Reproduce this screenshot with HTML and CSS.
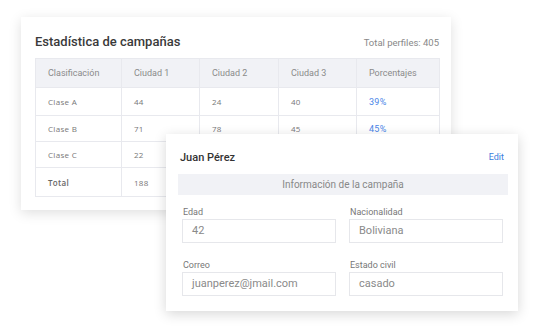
FILE: index.html
```html
<!DOCTYPE html>
<html lang="es">
<head>
    <meta charset="UTF-8">
    <title>Estadística de campañas</title>
    <link rel="stylesheet" href="styles.css">
</head>
<body>
    <div class="stats-card">
        <div class="stats-head">
            <h2>Estadística de campañas</h2>
            <span class="total">Total perfiles: 405</span>
        </div>
        <table class="stats-table">
            <colgroup>
                <col class="c1"><col class="c2"><col class="c3"><col class="c4"><col class="c5">
            </colgroup>
            <thead>
                <tr>
                    <th>Clasificación</th>
                    <th>Ciudad 1</th>
                    <th>Ciudad 2</th>
                    <th>Ciudad 3</th>
                    <th>Porcentajes</th>
                </tr>
            </thead>
            <tbody>
                <tr class="r-a">
                    <td>Clase A</td><td>44</td><td>24</td><td>40</td><td class="pct">39%</td>
                </tr>
                <tr>
                    <td>Clase B</td><td>71</td><td>78</td><td>45</td><td class="pct">45%</td>
                </tr>
                <tr>
                    <td>Clase C</td><td>22</td><td>18</td><td>12</td><td class="pct">16%</td>
                </tr>
                <tr class="r-total">
                    <td class="strong">Total</td><td>188</td><td>120</td><td>97</td><td class="pct">100%</td>
                </tr>
            </tbody>
        </table>
    </div>

    <div class="profile-card">
        <div class="profile-head">
            <h3>Juan Pérez</h3>
            <a class="edit" href="#">Edit</a>
        </div>
        <div class="section-bar">Información de la campaña</div>
        <div class="fields">
            <div class="field">
                <label>Edad</label>
                <div class="input">42</div>
            </div>
            <div class="field">
                <label>Nacionalidad</label>
                <div class="input">Boliviana</div>
            </div>
            <div class="field">
                <label>Correo</label>
                <div class="input">juanperez@jmail.com</div>
            </div>
            <div class="field">
                <label>Estado civil</label>
                <div class="input">casado</div>
            </div>
        </div>
    </div>
</body>
</html>
```

FILE: styles.css
```css
body {
    margin: 0;
    background-color: #fff;
    font-family: Roboto, "Liberation Sans", sans-serif;
    position: relative;
    width: 540px;
    height: 330px;
    overflow: hidden;
}
.stats-card {
    margin: 17px 0 0 21px;
    width: 430px;
    height: 193px;
    box-sizing: border-box;
    padding: 0 12px 0 14px;
    background-color: #fff;
    box-shadow: 0 3px 12px rgba(0, 0, 0, 0.13);
}
.stats-head {
    display: flex;
    justify-content: space-between;
    align-items: baseline;
    height: 41px;
}
.stats-head h2 {
    margin: 0;
    padding-top: 17px;
    font-size: 13px;
    font-weight: 500;
    color: #3a3a3a;
}
.total {
    font-size: 9.5px;
    color: #888;
}
.stats-table {
    width: 404px;
    border-collapse: collapse;
    table-layout: fixed;
}
.stats-table th,
.stats-table td {
    border: 1px solid #e8e9ee;
    text-align: left;
    padding: 0 0 0 12px;
}
.stats-table th {
    height: 28px;
    background-color: #f1f2f6;
    font-size: 9px;
    font-weight: 400;
    color: #8a8a8a;
}
.stats-table td {
    height: 25px;
    font-family: "Open Sans", sans-serif;
    font-size: 8px;
    letter-spacing: 0.3px;
    color: #777;
}
.stats-table .r-a td {
    height: 27px;
}
.stats-table .r-total td {
    height: 28px;
}
.stats-table td.strong {
    font-weight: 600;
    color: #666;
}
.stats-table td.pct {
    color: #4a86e8;
    font-family: Roboto, sans-serif;
    font-size: 9px;
}
.c1 { width: 86px; }
.c2 { width: 78px; }
.c3 { width: 79px; }
.c4 { width: 78px; }
.c5 { width: 83px; }

.profile-card {
    position: absolute;
    left: 166px;
    top: 134px;
    width: 352px;
    height: 177px;
    box-sizing: border-box;
    padding: 0 10px 0 12px;
    background-color: #fff;
    box-shadow: 0 3px 12px rgba(0, 0, 0, 0.16);
}
.profile-head {
    display: flex;
    justify-content: space-between;
    align-items: center;
    height: 40px;
    padding: 0 4px 0 2px;
}
.profile-head h3 {
    margin: 6px 0 0;
    font-size: 11px;
    font-weight: 500;
    color: #333;
}
.edit {
    margin-top: 6px;
    font-size: 9px;
    color: #3b7ddd;
    text-decoration: none;
}
.section-bar {
    height: 21px;
    line-height: 21px;
    background-color: #f1f2f6;
    text-align: center;
    font-size: 10px;
    color: #888;
}
.fields {
    display: grid;
    grid-template-columns: 154px 154px;
    column-gap: 13px;
    row-gap: 15px;
    padding: 10px 5px 0 4px;
}
.field label {
    display: block;
    height: 14px;
    line-height: 14px;
    font-size: 9px;
    color: #777;
    padding-left: 1px;
}
.input {
    height: 24px;
    box-sizing: border-box;
    border: 1px solid #e6e7eb;
    padding-left: 9px;
    line-height: 22px;
    font-size: 11px;
    color: #8a8a8a;
}
```
